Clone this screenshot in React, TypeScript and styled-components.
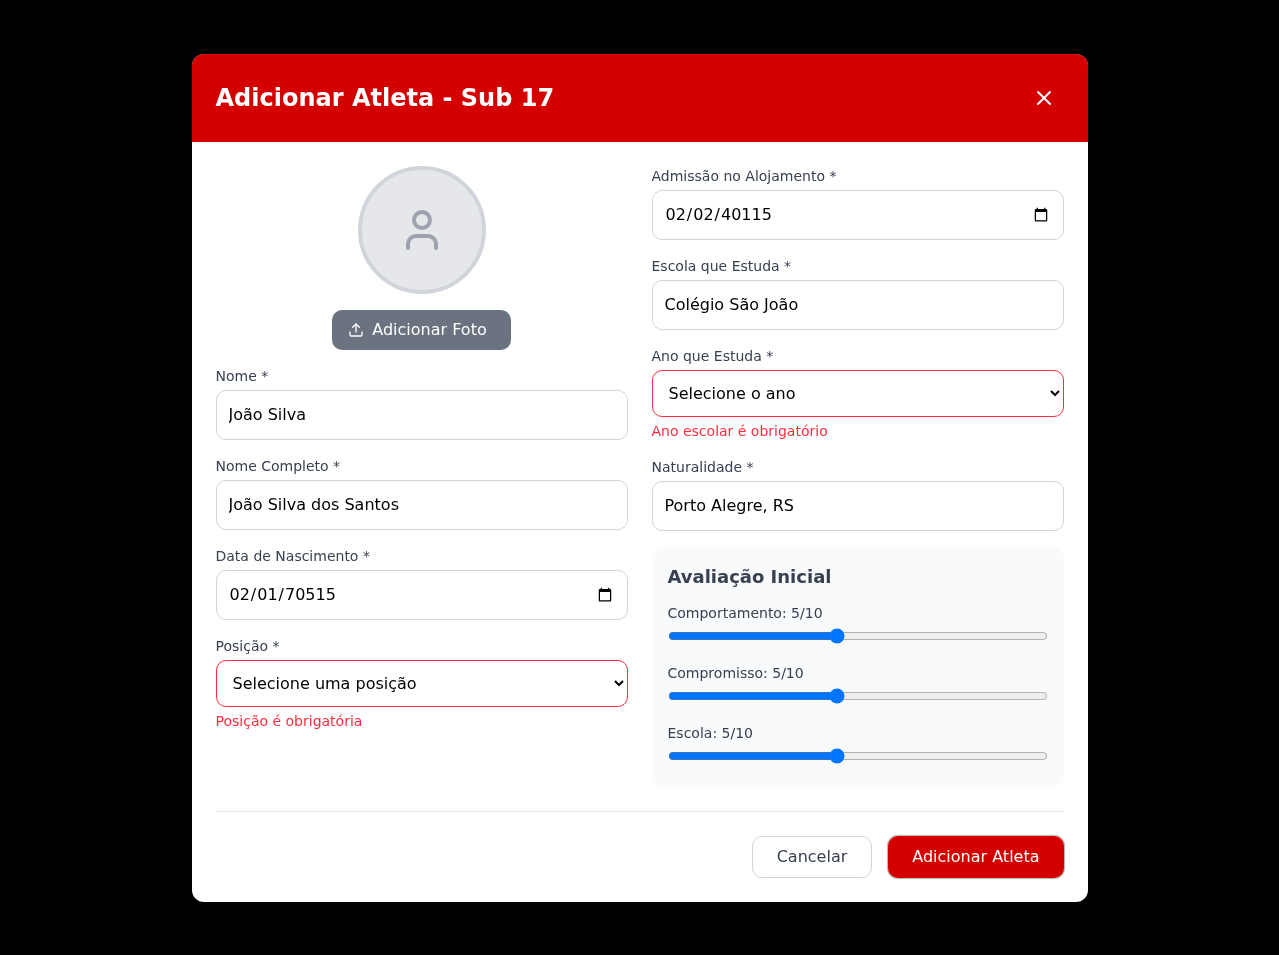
import { useState } from 'react';
import styled, { createGlobalStyle } from 'styled-components';
import { Upload, User, X } from 'lucide-react';

const GlobalStyle = createGlobalStyle`
    * {
        box-sizing: border-box;
    }
    html, body {
        margin: 0;
        background: #000;
        font-family: "DejaVu Sans", sans-serif;
        line-height: 24px;
    }
`;

const Overlay = styled.div`
    min-height: 955px;
    display: flex;
    align-items: center;
    justify-content: center;
    will-change: transform;
`;

const Modal = styled.div`
    width: 896px;
    background: #fff;
    border-radius: 12px;
    overflow: hidden;
`;

const Header = styled.header`
    background: #d40000;
    color: #fff;
    padding: 24px;
    display: flex;
    align-items: center;
    justify-content: space-between;
`;

const Title = styled.h2`
    margin: 0;
    font-size: 24px;
    line-height: 32px;
    font-weight: 700;
`;

const CloseButton = styled.button`
    width: 40px;
    height: 40px;
    padding: 8px;
    border: 0;
    border-radius: 8px;
    background: transparent;
    color: #fff;
    display: flex;
`;

const Body = styled.form`
    padding: 24px;
`;

const Columns = styled.div`
    display: grid;
    grid-template-columns: 1fr 1fr;
    gap: 24px;
`;

const Column = styled.div`
    display: flex;
    flex-direction: column;
    gap: 16px;
`;

const PhotoArea = styled.div`
    display: flex;
    flex-direction: column;
    align-items: center;
    gap: 16px;
`;

const Avatar = styled.div`
    width: 128px;
    height: 128px;
    border-radius: 50%;
    border: 4px solid #d1d5db;
    background: #e5e7eb;
    color: #9ca3af;
    display: flex;
    align-items: center;
    justify-content: center;
`;

const PhotoButton = styled.button`
    height: 40px;
    padding: 8px 24px 8px 16px;
    border: 0;
    border-radius: 10px;
    background: #6b7280;
    color: #fff;
    font: inherit;
    font-size: 16px;
    display: flex;
    align-items: center;
    gap: 8px;
`;

const Field = styled.div`
    display: flex;
    flex-direction: column;
`;

const Label = styled.label`
    display: block;
    font-size: 14px;
    line-height: 20px;
    color: #374151;
    margin-bottom: 4px;
`;

const Input = styled.input`
    width: 100%;
    height: 50px;
    padding: 12px;
    border: 1px solid #d1d5db;
    border-radius: 10px;
    background: #fff;
    color: #000;
    font-family: inherit;
    font-size: 16px;
    line-height: 24px;
`;

const Select = styled.select<{ $invalid?: boolean }>`
    width: 100%;
    height: 47px;
    padding: 12px;
    border: 1px solid ${({ $invalid }) => ($invalid ? '#ff2d3f' : '#d1d5db')};
    border-radius: 10px;
    background: #fff;
    color: #000;
    font-family: inherit;
    font-size: 16px;
`;

const ErrorText = styled.span`
    margin-top: 4px;
    font-size: 14px;
    line-height: 20px;
    color: #ff2d3f;
`;

const Evaluation = styled.section`
    background: #f9fafb;
    border-radius: 12px;
    padding: 16px;
`;

const EvaluationTitle = styled.h3`
    margin: 0 0 12px;
    font-size: 18px;
    line-height: 28px;
    font-weight: 700;
    color: #374151;
`;

const SliderList = styled.div`
    display: flex;
    flex-direction: column;
    gap: 12px;
`;

const Slider = styled.input`
    display: block;
    width: 100%;
    height: 16px;
    margin: 5px 0 7px;
`;

const Footer = styled.footer`
    margin-top: 24px;
    padding-top: 24px;
    border-top: 1px solid #e5e7eb;
    display: flex;
    justify-content: flex-end;
    gap: 16px;
`;

const CancelButton = styled.button`
    height: 42px;
    padding: 8px 24px;
    border: 1px solid #d1d5db;
    border-radius: 10px;
    background: #fff;
    color: #374151;
    font: inherit;
    font-size: 16px;
`;

const SubmitButton = styled.button`
    height: 42px;
    padding: 8px 24px;
    border: 0;
    border-radius: 10px;
    background: #d40000;
    box-shadow: 0 0 1px 1px rgba(0, 0, 0, 0.3);
    color: #fff;
    font: inherit;
    font-size: 16px;
`;

const sliders = ['Comportamento', 'Compromisso', 'Escola'];

const TextField = ({ label, value, type = 'text' }: { label: string; value: string; type?: string }) => {
    const [current, setCurrent] = useState(value);
    return (
        <Field>
            <Label>{label}</Label>
            <Input type={type} value={current} onChange={(e) => setCurrent(e.target.value)} />
        </Field>
    );
};

const SelectField = ({ label, placeholder, error }: { label: string; placeholder: string; error: string }) => {
    return (
        <Field>
            <Label>{label}</Label>
            <Select $invalid defaultValue="">
                <option value="">{placeholder}</option>
            </Select>
            <ErrorText>{error}</ErrorText>
        </Field>
    );
};

const App = () => {
    return (
        <>
            <GlobalStyle />
            <Overlay>
                <Modal>
                    <Header>
                        <Title>Adicionar Atleta - Sub 17</Title>
                        <CloseButton type="button" aria-label="Fechar">
                            <X size={24} />
                        </CloseButton>
                    </Header>
                    <Body>
                        <Columns>
                            <Column>
                                <PhotoArea>
                                    <Avatar>
                                        <User size={48} />
                                    </Avatar>
                                    <PhotoButton type="button">
                                        <Upload size={16} />
                                        Adicionar Foto
                                    </PhotoButton>
                                </PhotoArea>
                                <TextField label="Nome *" value="João Silva" />
                                <TextField label="Nome Completo *" value="João Silva dos Santos" />
                                <TextField label="Data de Nascimento *" type="date" value="70515-02-01" />
                                <SelectField label="Posição *" placeholder="Selecione uma posição" error="Posição é obrigatória" />
                            </Column>
                            <Column>
                                <TextField label="Admissão no Alojamento *" type="date" value="40115-02-02" />
                                <TextField label="Escola que Estuda *" value="Colégio São João" />
                                <SelectField label="Ano que Estuda *" placeholder="Selecione o ano" error="Ano escolar é obrigatório" />
                                <TextField label="Naturalidade *" value="Porto Alegre, RS" />
                                <Evaluation>
                                    <EvaluationTitle>Avaliação Inicial</EvaluationTitle>
                                    <SliderList>
                                        {
                                            sliders.map((name) => {
                                                return (
                                                    <div key={name}>
                                                        <Label>{name}: 5/10</Label>
                                                        <Slider type="range" min={1} max={10} defaultValue={5} />
                                                    </div>
                                                );
                                            })
                                        }
                                    </SliderList>
                                </Evaluation>
                            </Column>
                        </Columns>
                        <Footer>
                            <CancelButton type="button">Cancelar</CancelButton>
                            <SubmitButton type="button">Adicionar Atleta</SubmitButton>
                        </Footer>
                    </Body>
                </Modal>
            </Overlay>
        </>
    );
};

export default App;
